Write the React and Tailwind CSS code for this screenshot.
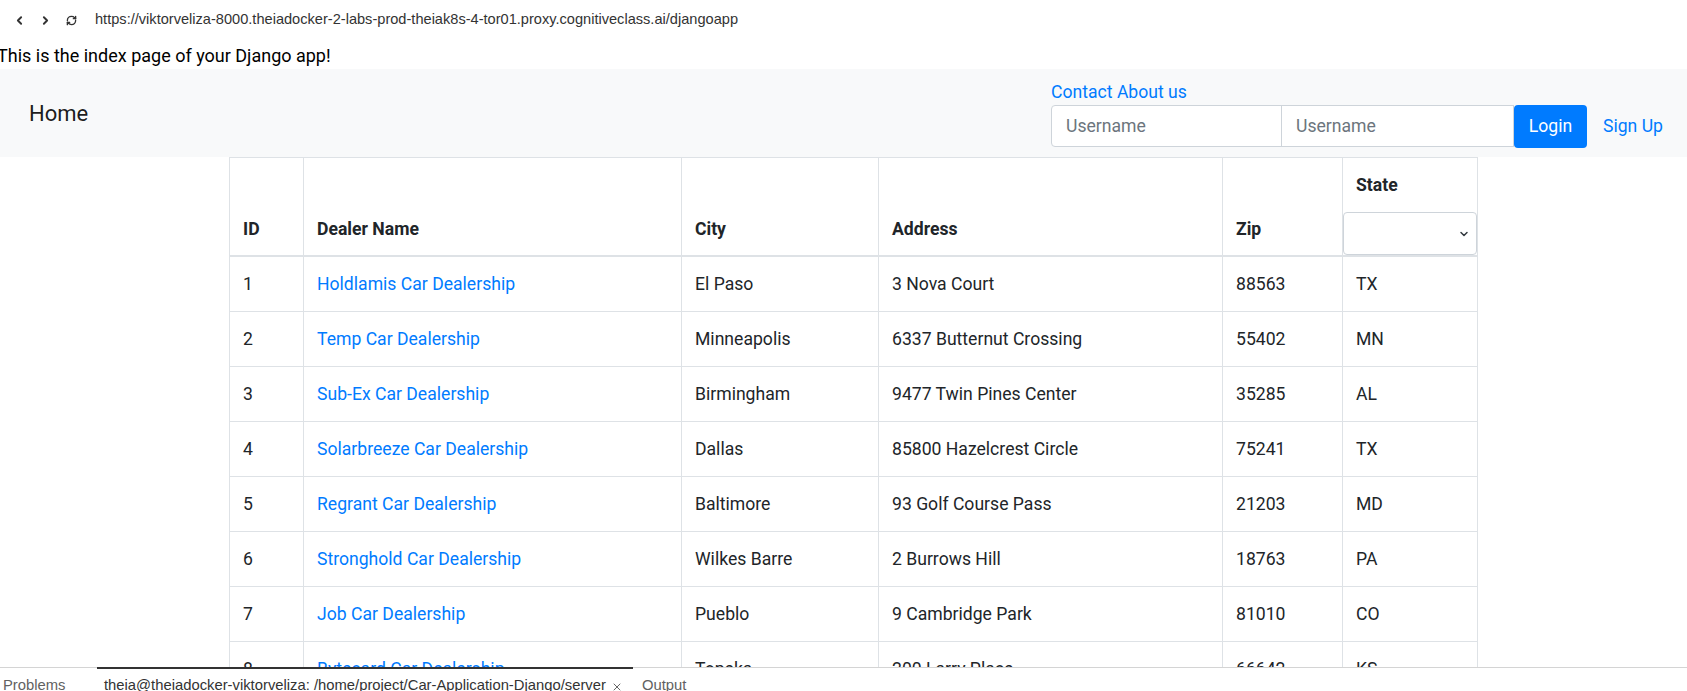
import { ChevronLeft, ChevronRight, RefreshCw, ChevronDown, X } from "lucide-react";

const dealers = [
  [1, "Holdlamis Car Dealership", "El Paso", "3 Nova Court", "88563", "TX"],
  [2, "Temp Car Dealership", "Minneapolis", "6337 Butternut Crossing", "55402", "MN"],
  [3, "Sub-Ex Car Dealership", "Birmingham", "9477 Twin Pines Center", "35285", "AL"],
  [4, "Solarbreeze Car Dealership", "Dallas", "85800 Hazelcrest Circle", "75241", "TX"],
  [5, "Regrant Car Dealership", "Baltimore", "93 Golf Course Pass", "21203", "MD"],
  [6, "Stronghold Car Dealership", "Wilkes Barre", "2 Burrows Hill", "18763", "PA"],
  [7, "Job Car Dealership", "Pueblo", "9 Cambridge Park", "81010", "CO"],
  [8, "Bytecard Car Dealership", "Topeka", "200 Larry Place", "66642", "KS"],
];

export default function App() {
  const td = "border border-[#dee2e6] px-[13px] py-[14px] leading-[26px]";
  const th = "border border-[#dee2e6] border-b-2 px-[13px] pb-[13px] align-bottom text-left font-bold leading-[26px]";

  return (
    <div className="flex h-[691px] w-[1687px] flex-col overflow-hidden bg-white font-['Segoe_UI','Roboto',sans-serif] text-[17.6px] text-[#212529]">
      <div className="h-[667px] overflow-hidden">
        {/* browser bar */}
        <div className="flex h-[40px] items-center font-['Liberation_Sans',Arial,sans-serif] text-[14.6px] text-[#333]">
          <ChevronLeft className="ml-[13px]" size={13} strokeWidth={3.5} />
          <ChevronRight className="ml-[13px]" size={13} strokeWidth={3.5} />
          <RefreshCw className="ml-[14px]" size={11} strokeWidth={3} />
          <span className="ml-[18px]">
            https://viktorveliza-8000.theiadocker-2-labs-prod-theiak8s-4-tor01.proxy.cognitiveclass.ai/djangoapp
          </span>
        </div>

        <div className="-ml-[3px] h-[29px] pt-[3px] text-[18px] leading-[26px] text-black">
          This is the index page of your Django app!
        </div>

        {/* navbar */}
        <nav className="flex h-[88px] items-center justify-between bg-[#f8f9fa] pl-[29px] pr-[24px]">
          <a href="#" className="text-[22px] leading-[33px] text-black/90">Home</a>
          <div className="flex flex-col">
            <div className="leading-[26px] text-[#007bff]">
              <a href="#">Contact</a> <a href="#">About us</a>
            </div>
            <div className="flex items-center">
              <input
                placeholder="Username"
                className="h-[42px] w-[231px] rounded-l-[4px] border border-[#ced4da] bg-white px-[14px] text-[#495057] outline-none placeholder:text-[#6c757d]"
              />
              <input
                placeholder="Username"
                className="-ml-px h-[42px] w-[233px] border border-[#ced4da] bg-white px-[14px] text-[#495057] outline-none placeholder:text-[#6c757d]"
              />
              <button className="h-[43px] w-[73px] rounded-[4px] bg-[#007bff] text-white">Login</button>
              <a href="#" className="ml-[16px] text-[#007bff]">Sign Up</a>
            </div>
          </div>
        </nav>

        {/* dealers table */}
        <table className="ml-[229px] w-[1248px] table-fixed border-collapse">
          <colgroup>
            <col className="w-[74px]" />
            <col className="w-[378px]" />
            <col className="w-[197px]" />
            <col className="w-[344px]" />
            <col className="w-[120px]" />
            <col className="w-[135px]" />
          </colgroup>
          <thead>
            <tr>
              <th className={th}>ID</th>
              <th className={th}>Dealer Name</th>
              <th className={th}>City</th>
              <th className={th}>Address</th>
              <th className={th}>Zip</th>
              <th className="border border-b-2 border-[#dee2e6] p-0 text-left align-bottom font-bold leading-[26px]">
                <div className="px-[13px] pt-[14px]">State</div>
                <div className="relative mt-[14px]">
                  <select className="block h-[43px] w-full appearance-none rounded-[4px] border border-[#ced4da] bg-white outline-none" />
                  <ChevronDown
                    className="pointer-events-none absolute right-[7px] top-[16px] text-[#343a40]"
                    size={12}
                    strokeWidth={3}
                  />
                </div>
              </th>
            </tr>
          </thead>
          <tbody>
            {dealers.map(([id, name, city, address, zip, st]) => (
              <tr key={id}>
                <td className={td}>{id}</td>
                <td className={td}>
                  <a href="#" className="text-[#007bff]">{name}</a>
                </td>
                <td className={td}>{city}</td>
                <td className={td}>{address}</td>
                <td className={td}>{zip}</td>
                <td className={td}>{st}</td>
              </tr>
            ))}
          </tbody>
        </table>
      </div>

      {/* theia bottom panel */}
      <div className="flex h-[24px] border-t border-[#d4d4d4] font-['Liberation_Sans',Arial,sans-serif] text-[14.8px] leading-[16px] text-[#616161]">
        <span className="w-[97px] pl-[3px] pt-[9px]">Problems</span>
        <div className="-mt-px flex w-[536px] border-t-2 border-[#333] pl-[7px] pt-[8px] text-[#333]">
          <span>theia@theiadocker-viktorveliza: /home/project/Car-Application-Django/server</span>
          <X className="ml-[5px] mt-[4px]" size={12} strokeWidth={1.5} />
        </div>
        <span className="ml-[9px] pt-[9px]">Output</span>
      </div>
    </div>
  );
}
